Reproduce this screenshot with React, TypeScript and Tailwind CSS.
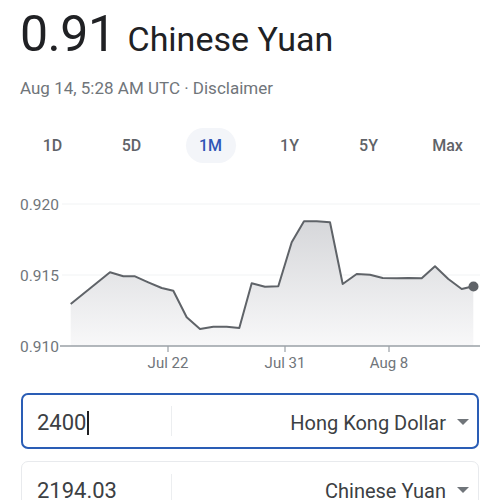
import React from 'react';

const points: [number, number][] = [
  [70.7, 305], [110, 273.3], [123.3, 277.3], [135, 277.3], [148.3, 283.3], [161.7, 289],
  [173.3, 291.7], [186.7, 318.3], [200, 330], [213.3, 327.7], [226.7, 327.7], [239.3, 329],
  [251.7, 284.3], [265, 287.7], [278.3, 287.3], [291.7, 243.3], [304, 222.3], [316.7, 222.3],
  [330, 223.3], [342.7, 285], [356.7, 275], [370, 275.7], [382.7, 279], [396.7, 279.3],
  [408.3, 279], [421.7, 279.3], [435, 267.3], [448.3, 280], [461.7, 290], [473.3, 287.3],
];

const ranges = ['1D', '5D', '1M', '1Y', '5Y', 'Max'];

function Chart() {
  const line = points.map(([x, y], i) => `${i === 0 ? 'M' : 'L'}${x} ${y}`).join(' ');
  const area = `${line} L473.3 347 L70.7 347 Z`;
  return (
    <svg width="500" height="195" viewBox="0 190 500 195" className="block">
      <defs>
        <linearGradient id="fillGrad" x1="0" y1="222" x2="0" y2="347" gradientUnits="userSpaceOnUse">
          <stop offset="0" stopColor="#d6d7da" />
          <stop offset="1" stopColor="#f8f8f9" />
        </linearGradient>
      </defs>
      {/* grid */}
      <line x1="62" y1="205" x2="480" y2="205" stroke="#f1f3f4" strokeWidth="1" />
      <line x1="62" y1="276" x2="480" y2="276" stroke="#f1f3f4" strokeWidth="1" />
      <path d={area} fill="url(#fillGrad)" />
      <path d={line} fill="none" stroke="#5f6368" strokeWidth="2" strokeLinejoin="round" />
      <circle cx="473.5" cy="287.5" r="5" fill="#5f6368" />
      {/* axis */}
      <line x1="60" y1="347" x2="480" y2="347" stroke="#9aa0a6" strokeWidth="1.5" />
      {[168, 285, 389].map((x) => (
        <line key={x} x1={x} y1="347" x2={x} y2="353" stroke="#9aa0a6" strokeWidth="1.2" />
      ))}
      <g fill="#70757a" fontFamily="Roboto, sans-serif" fontSize="15.5">
        <text x="20" y="210.5">0.920</text>
        <text x="20" y="281.5">0.915</text>
        <text x="20" y="352.5">0.910</text>
      </g>
      <g fill="#70757a" fontFamily="Roboto, sans-serif" fontSize="15" textAnchor="middle">
        <text x="168" y="368.5">Jul 22</text>
        <text x="285" y="368.5">Jul 31</text>
        <text x="389" y="368.5">Aug 8</text>
      </g>
    </svg>
  );
}

function Caret() {
  return (
    <svg width="12" height="7" viewBox="0 0 12 7" className="shrink-0">
      <path d="M0 0 L12 0 L6 6 Z" fill="#70757a" />
    </svg>
  );
}

export default function App() {
  return (
    <div className="w-[500px] h-[500px] overflow-hidden bg-white font-['Roboto',sans-serif] text-[#202124]">
      {/* Header */}
      <div className="px-5 pt-[4px]">
        <div className="flex items-baseline gap-[12px]">
          <span className="text-[50px] leading-[60px] tracking-[-0.5px]">0.91</span>
          <span className="text-[34px] leading-[40px]">Chinese Yuan</span>
        </div>
        <div className="mt-[14px] text-[17px] leading-[20px] text-[#70757a]">
          Aug 14, 5:28 AM UTC · Disclaimer
        </div>
      </div>

      {/* Range tabs */}
      <div className="mx-[13px] mt-[30px] grid grid-cols-6">
        {ranges.map((r) => (
          <div key={r} className="flex justify-center">
            <span
              className={`flex h-[35px] w-[50px] items-center justify-center rounded-full text-[16px] font-medium ${
                r === '1M' ? 'bg-[#f3f5f9] text-[#2f56b6]' : 'text-[#5f6368]'
              }`}
            >
              {r}
            </span>
          </div>
        ))}
      </div>

      {/* Chart */}
      <div className="mt-[26px]">
        <Chart />
      </div>

      {/* Converter */}
      <div className="mx-[21px] mt-[9px] flex flex-col gap-[12px]">
        <div className="flex h-[56px] items-center rounded-[7px] border-2 border-[#2a5db5]">
          <div className="flex w-[148px] items-center pl-[14px] pt-[3px] text-[22px] text-[#3c4043]">
            2400<span className="ml-[1px] h-[24px] w-[1.5px] bg-[#202124]" />
          </div>
          <div className="h-[30px] w-px bg-[#eceef0]" />
          <div className="flex flex-1 items-center justify-end gap-[11px] pr-[8px] pt-[3px] text-[20px] text-[#3c4043]">
            Hong Kong Dollar
            <Caret />
          </div>
        </div>
        <div className="flex h-[56px] items-center rounded-[7px] border border-[#e8eaed]">
          <div className="flex w-[149px] items-center pl-[15px] pt-[3px] text-[22px] text-[#3c4043]">2194.03</div>
          <div className="h-[30px] w-px bg-[#eceef0]" />
          <div className="flex flex-1 items-center justify-end gap-[11px] pr-[9px] pt-[3px] text-[20px] text-[#3c4043]">
            Chinese Yuan
            <Caret />
          </div>
        </div>
      </div>
    </div>
  );
}
